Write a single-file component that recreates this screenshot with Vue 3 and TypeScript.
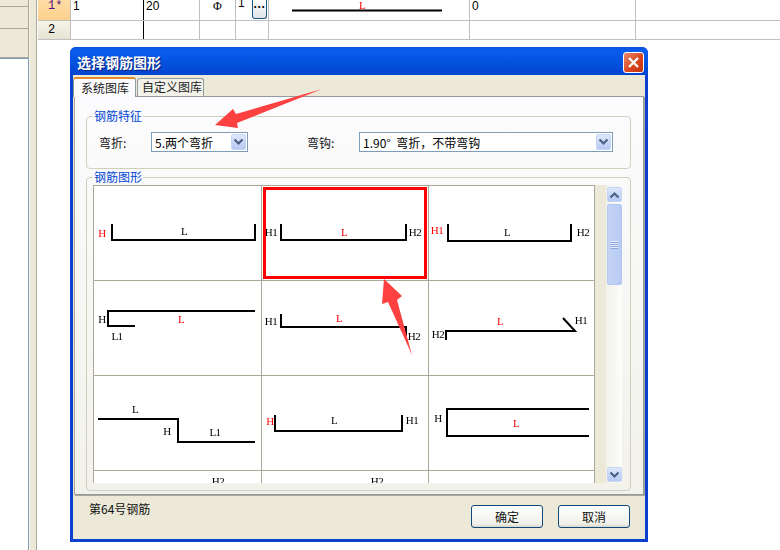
<script setup lang="ts">
interface Label { t: string; x: number; y: number; red?: boolean }
interface Shape { pts: string[]; labels: Label[] }
const cols = [94, 262, 429]
const rows = [186, 281, 376, 471]
const shapes: Shape[] = [
  { pts: ['112,224 112,240 255,240 255,224'], labels: [{ t: 'H', x: 102, y: 233, red: true }, { t: 'L', x: 184, y: 231 }] },
  { pts: ['281,224 281,240 406,240 406,224'], labels: [{ t: 'H1', x: 271, y: 232 }, { t: 'L', x: 344, y: 232, red: true }, { t: 'H2', x: 415, y: 232 }] },
  { pts: ['448,224 448,241 571,241 571,224'], labels: [{ t: 'H1', x: 437, y: 230, red: true }, { t: 'L', x: 507, y: 232 }, { t: 'H2', x: 583, y: 232 }] },
  { pts: ['255,311 108,311 108,326 135,326'], labels: [{ t: 'H', x: 102, y: 319 }, { t: 'L', x: 181, y: 319, red: true }, { t: 'L1', x: 117, y: 336 }] },
  { pts: ['281,314 281,327 406,327 406,336'], labels: [{ t: 'H1', x: 271, y: 321 }, { t: 'L', x: 339, y: 318, red: true }, { t: 'H2', x: 414, y: 336 }] },
  { pts: ['446,340 446,331 575,331 563,318'], labels: [{ t: 'H2', x: 438, y: 334 }, { t: 'L', x: 500, y: 321, red: true }, { t: 'H1', x: 581, y: 320 }] },
  { pts: ['98,419 178,419 178,442 255,442'], labels: [{ t: 'L', x: 135, y: 409 }, { t: 'H', x: 167, y: 431 }, { t: 'L1', x: 215, y: 432 }] },
  { pts: ['275,415 275,431 402,431 402,415'], labels: [{ t: 'H', x: 270, y: 421, red: true }, { t: 'L', x: 334, y: 420 }, { t: 'H1', x: 412, y: 420 }] },
  { pts: ['589,409 447,409 447,436 589,436'], labels: [{ t: 'H', x: 438, y: 418 }, { t: 'L', x: 516, y: 423, red: true }] },
  { pts: [], labels: [{ t: 'H2', x: 218, y: 481 }] },
  { pts: [], labels: [{ t: 'H2', x: 377, y: 481 }] },
  { pts: [], labels: [] },
]
const cellBox = (i: number) => `${cols[i % 3]} ${rows[Math.floor(i / 3)]} 167 94`
</script>

<template>
  <div class="page">
    <aside class="side">
      <div class="side-tab t1"></div>
      <div class="side-tab t2"></div>
      <div class="side-tab t3"></div>
      <div class="side-list"></div>
    </aside>
    <div class="splitter"></div>
    <main class="sheet">
      <div class="row r1">
        <div class="cell head active">1*</div>
        <div class="cell dark">1</div>
        <div class="cell">20</div>
        <div class="cell sym">Φ</div>
        <div class="cell btn-cell"><span class="up">1</span><span class="dots">···</span></div>
        <div class="cell draw">
          <svg width="200" height="20" viewBox="0 0 200 20">
            <text class="lab red" x="93" y="9" text-anchor="middle">L</text>
            <line x1="23" y1="10.5" x2="173" y2="10.5" stroke="#000" stroke-width="2" />
          </svg>
        </div>
        <div class="cell">0</div>
        <div class="cell last"></div>
      </div>
      <div class="row r2">
        <div class="cell head">2</div>
        <div class="cell dark"></div>
        <div class="cell"></div>
        <div class="cell"></div>
        <div class="cell"></div>
        <div class="cell"></div>
        <div class="cell"></div>
        <div class="cell last"></div>
      </div>
    </main>

    <section class="dialog">
      <header class="title">
        <span>选择钢筋图形</span>
        <button class="close">
          <svg width="13" height="13" viewBox="0 0 13 13">
            <path d="M2 2 L11 11 M11 2 L2 11" stroke="#fff" stroke-width="2.4" />
          </svg>
        </button>
      </header>
      <div class="client">
        <nav class="tabs">
          <span class="tab on">系统图库</span>
          <span class="tab">自定义图库</span>
        </nav>
        <div class="panel">
          <div class="group g1">
            <span class="legend">钢筋特征</span>
            <div class="form">
              <span class="f-label l1">弯折:</span>
              <div class="select s1">
                <span>5.两个弯折</span>
                <i class="drop"><svg width="11" height="8" viewBox="0 0 11 8"><path d="M1.5 1.5 L5.5 5.5 L9.5 1.5" fill="none" stroke="#4d6185" stroke-width="2.2" /></svg></i>
              </div>
              <span class="f-label l2">弯钩:</span>
              <div class="select s2">
                <span>1.90°&nbsp;&nbsp;弯折&#xFF0C;不带弯钩</span>
                <i class="drop"><svg width="11" height="8" viewBox="0 0 11 8"><path d="M1.5 1.5 L5.5 5.5 L9.5 1.5" fill="none" stroke="#4d6185" stroke-width="2.2" /></svg></i>
              </div>
            </div>
          </div>
          <div class="group g2">
            <span class="legend">钢筋图形</span>
            <div class="list">
              <div class="grid">
                <div v-for="(s, i) in shapes" :key="i" class="shape" :class="{ picked: i === 1 }">
                  <svg width="167" height="94" :viewBox="cellBox(i)">
                    <polyline v-for="(p, j) in s.pts" :key="j" :points="p" fill="none" stroke="#000" stroke-width="2" />
                    <text v-for="l in s.labels" :key="l.t + l.x" class="lab" :class="{ red: l.red }" :x="l.x" :y="l.y + 4" text-anchor="middle">{{ l.t }}</text>
                  </svg>
                </div>
              </div>
              <div class="strip"></div>
              <div class="scroll">
                <i class="sbtn"><svg width="11" height="8" viewBox="0 0 11 8"><path d="M1.5 6.5 L5.5 2.5 L9.5 6.5" fill="none" stroke="#4d6185" stroke-width="2.2" /></svg></i>
                <i class="thumb"><b></b><b></b><b></b><b></b></i>
                <span class="space"></span>
                <i class="sbtn"><svg width="11" height="8" viewBox="0 0 11 8"><path d="M1.5 1.5 L5.5 5.5 L9.5 1.5" fill="none" stroke="#4d6185" stroke-width="2.2" /></svg></i>
              </div>
            </div>
          </div>
        </div>
        <footer class="foot">
          <span class="status">第64号钢筋</span>
          <div class="btns">
            <button class="btn">确定</button>
            <button class="btn">取消</button>
          </div>
        </footer>
      </div>
    </section>

    <svg class="arrows" width="780" height="550" viewBox="0 0 780 550">
      <polygon points="215,125 233,109 236,114 322,89 237,123 238,128" fill="#fd4040" />
      <polygon points="384,279 402,296 397,300 412,355 388,302 382,304" fill="#fd4040" />
    </svg>
  </div>
</template>

<style scoped>
* { box-sizing: border-box; }
.page {
  position: relative;
  width: 780px;
  height: 550px;
  overflow: hidden;
  display: flex;
  background: #fff;
  font-family: "Noto Sans CJK SC", "Liberation Sans", sans-serif;
  font-size: 12px;
  color: #000;
}
.side { width: 29px; flex: none; display: flex; flex-direction: column; }
.side-tab { background: #ece9d8; border-bottom: 1px solid #aca899; border-right: 1px solid #aca899; }
.t1 { height: 7px; }
.t2 { height: 22px; }
.t3 { height: 29px; }
.side-list { flex: 1; background: #fff; border-top: 1px solid #7f9db9; border-right: 1px solid #7f9db9; }
.splitter { width: 8px; flex: none; background: #ece9d8; border-left: 1px solid #f6f5ee; border-right: 1px solid #aca899; }
.sheet { flex: 1; min-width: 0; padding-left: 1px; }
.row {
  display: grid;
  grid-template-columns: 33px 73px 56px 36px 33px 201px 166px 1fr;
  border-bottom: 1px solid #c0c0c0;
  font-family: "Liberation Sans", sans-serif;
}
.r1 { height: 21px; }
.r2 { height: 19px; }
.r1 .cell { line-height: 12px; }
.cell { border-right: 1px solid #c0c0c0; padding-left: 2px; overflow: hidden; min-width: 0; }
.cell.last { border-right: 0; }
.cell.dark { border-right: 1px solid #000; }
.head {
  font-family: "Liberation Mono", monospace;
  font-size: 12px;
  padding-left: 10px;
  background: linear-gradient(#f6f4ea, #e6e3d2);
}
.r1 .head { line-height: 12px; }
.r2 .head { line-height: 18px; }
.active { background: linear-gradient(#fddca6, #fbd08c); color: #5a1180; }
.sym { text-align: center; font-family: "Liberation Serif", serif; padding-left: 0; }
.btn-cell { display: flex; justify-content: space-between; padding-right: 1px; }
.up { line-height: 6px; }
.dots {
  display: block;
  width: 15px;
  height: 19px;
  border: 1px solid #1b5a86;
  border-top: 0;
  border-radius: 0 0 3px 3px;
  background: linear-gradient(#fff, #dfe3e6);
  font-weight: bold;
  line-height: 14px;
  text-align: center;
}
.draw { padding: 0; }
.draw svg { display: block; will-change: opacity; }
.lab { font-family: "Liberation Serif", serif; font-size: 11px; letter-spacing: -0.5px; fill: #000; }
.lab.red { fill: #f00; }

.dialog {
  position: absolute;
  left: 70px;
  top: 47px;
  width: 578px;
  height: 495px;
  display: flex;
  flex-direction: column;
  background: #0a3fd0;
  border-radius: 6px 6px 0 0;
  overflow: hidden;
}
.title {
  height: 28px;
  flex: none;
  display: flex;
  align-items: center;
  justify-content: space-between;
  padding: 2px 4px 0 7px;
  background: linear-gradient(#0a52dd 0, #0a5cf0 14%, #0454e0 50%, #0344d0 100%);
  color: #fff;
  font-weight: bold;
  font-size: 14px;
  text-shadow: 1px 1px 1px #0a1f78;
}
.close {
  width: 21px;
  height: 21px;
  padding: 0;
  display: flex;
  align-items: center;
  justify-content: center;
  border: 1px solid #fff;
  border-radius: 3px;
  background: linear-gradient(135deg, #ec8a68, #d8431c 60%, #c03510);
}
.client {
  flex: 1;
  min-height: 0;
  margin: 0 3px 3px;
  background: #ece9d8;
  display: flex;
  flex-direction: column;
}
.tabs { height: 21px; flex: none; display: flex; align-items: flex-end; gap: 1px; }
.tab {
  height: 18px;
  line-height: 16px;
  padding: 0 1px 0 4px;
  background: #f3f2ea;
  border: 1px solid #919b9c;
  border-bottom: 0;
  border-radius: 3px 3px 0 0;
  color: #222;
}
.tab.on {
  height: 20px;
  line-height: 17px;
  padding: 0 6px 0 7px;
  background: #fcfcfe;
  border-top: 2px solid #e68b2c;
  position: relative;
  top: 1px;
}
.panel {
  height: 399px;
  flex: none;
  margin: 0 1px;
  padding: 19px 12px 0 11px;
  border: 1px solid #919b9c;
  border-left-color: #aca899;
  background: linear-gradient(#fcfcfe, #f2f1ea);
  box-shadow: 1px 1px 0 #aca899;
}
.group { position: relative; border: 1px solid #d0d0bf; border-radius: 4px; }
.g1 { height: 53px; }
.g2 { height: 314px; margin-top: 8px; padding: 7px 8px 0 6px; }
.legend {
  position: absolute;
  left: 6px;
  top: -8px;
  padding: 0 1px;
  background: #fbfbfb;
  color: #0046d5;
  line-height: 14px;
}
.form { display: flex; align-items: center; margin-top: 15px; padding-left: 12px; height: 20px; }
.f-label { color: #111; }
.l1 { width: 52px; }
.l2 { width: 52px; margin-left: 59px; }
.select {
  height: 20px;
  border: 1px solid #7f9db9;
  background: #fff;
  display: flex;
  align-items: center;
  justify-content: space-between;
  padding: 0 1px 0 3px;
}
.s1 { width: 97px; }
.s2 { width: 254px; }
.drop, .sbtn {
  width: 15px;
  height: 16px;
  flex: none;
  display: flex;
  align-items: center;
  justify-content: center;
  background: linear-gradient(#dfe8fb, #b5c9f3);
  border: 1px solid #c6d5f6;
  border-radius: 2px;
}
.sbtn { height: 15px; }
.list {
  height: 298px;
  width: 529px;
  display: flex;
  overflow: hidden;
  background: #fff;
}
.grid {
  width: 502px;
  flex: none;
  display: grid;
  grid-template-columns: 168px 167px 166px;
  grid-auto-rows: 95px;
  border-left: 1px solid #aca899;
  border-top: 1px solid #aca899;
}
.shape {
  position: relative;
  border-right: 1px solid #aca899;
  border-bottom: 1px solid #aca899;
  overflow: hidden;
}
.shape svg { display: block; will-change: opacity; }
.picked::after {
  content: "";
  position: absolute;
  inset: 1px;
  border: 3px solid #f00;
}
.strip { width: 11px; flex: none; background: #ece9d8; }
.scroll {
  width: 16px;
  flex: none;
  display: flex;
  flex-direction: column;
  align-items: center;
  padding: 2px 0 1px;
  background: linear-gradient(90deg, #f3f2ea, #fdfdfa);
}
.thumb {
  width: 15px;
  height: 81px;
  margin-top: 2px;
  border: 1px solid #b3c6f0;
  border-radius: 2px;
  background: linear-gradient(90deg, #c5d4f6, #b7cbf5);
  display: flex;
  flex-direction: column;
  align-items: center;
  justify-content: center;
  gap: 1px;
}
.thumb b { display: block; width: 7px; height: 1px; background: #e8eefc; box-shadow: 0 1px 0 #8da7dd; }
.space { flex: 1; }
.foot { flex: 1; display: flex; justify-content: space-between; padding: 7px 15px 0 16px; }
.status { line-height: 14px; color: #111; }
.btns { display: flex; gap: 15px; padding-top: 3px; }
.btn {
  width: 72px;
  height: 23px;
  padding: 0;
  border: 1px solid #0f4a7c;
  border-radius: 3px;
  background: linear-gradient(#fff, #f0f0ea 85%, #d8d4c8);
  font: inherit;
  color: #111;
}
.arrows { position: absolute; left: 0; top: 0; pointer-events: none; }
</style>
